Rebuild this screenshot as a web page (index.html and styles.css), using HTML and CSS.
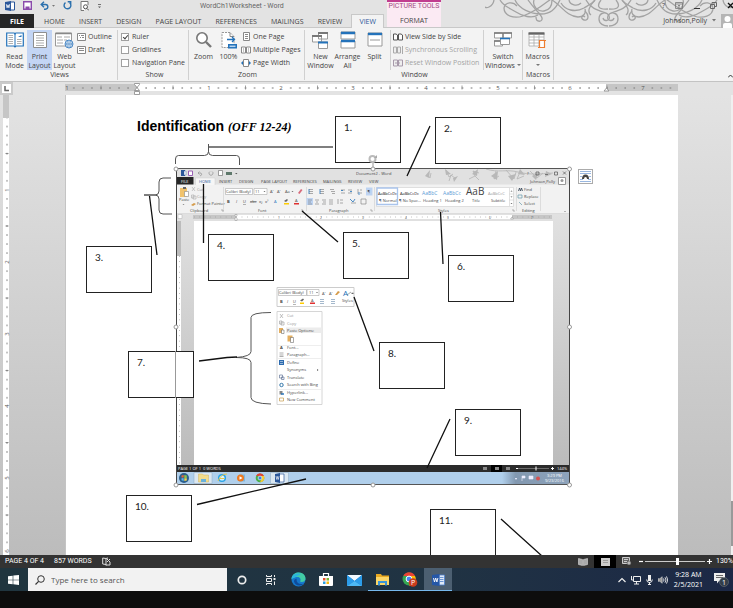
FILE: index.html
```html
<!DOCTYPE html>
<html lang="en">
<head>
    <meta charset="UTF-8">
    <meta name="viewport" content="width=device-width, initial-scale=1.0">
    <title>WordCh1Worksheet - Word</title>
    <link rel="stylesheet" href="styles.css">
</head>
<body>
    <header class="header">
        <div class="titlebar">
            <div class="quick-access">
                <svg width="10" height="10" viewBox="0 0 10 10"><path d="M5 1h4.500v8H5" fill="#fff" stroke="#2b579a"/><path d="M0 1l6-1v10l-6-1z" fill="#2b579a"/><path d="M1.300 3.200l.8 3.600.9-3 .9 3 .8-3.600" fill="none" stroke="#fff" stroke-width=".8"/></svg>
                <button aria-label="Save"><svg width="9" height="9" viewBox="0 0 9 9"><path d="M.7.7h7.600v7.600H.7z" fill="#fff" stroke="#8a4bab" stroke-width="1.400"/><path d="M2.500 8V5.500h4V8" fill="#8a4bab"/></svg></button>
                <button aria-label="Undo"><svg width="15" height="9" viewBox="0 0 15 9"><path d="M1 3.500h4.500a2.300 2.300 0 0 1 0 4.700H4M4 .8L1.200 3.500 4 6.200" fill="none" stroke="#2b70ad" stroke-width="1.400"/><path d="M12 4h3l-1.500 1.700z" fill="#777"/></svg></button>
                <button aria-label="Redo"><svg width="9" height="9" viewBox="0 0 9 9"><path d="M2.500 1.600A3.400 3.400 0 1 0 6.600 1.700M4.700.8h3v3" fill="none" stroke="#2b70ad" stroke-width="1.400"/></svg></button>
                <button aria-label="Print preview"><svg width="9" height="10" viewBox="0 0 9 10"><path d="M8 4V.5H1v9h3" fill="#fff" stroke="#777"/><circle cx="5.500" cy="5.800" r="2" fill="none" stroke="#555"/><path d="M7 7.500l2 2" stroke="#555"/></svg></button>
                <button aria-label="Customize"><svg width="5" height="6" viewBox="0 0 5 6"><path d="M1 1.500h3" stroke="#555" stroke-width=".8"/><path d="M1 3.500h3L2.500 5z" fill="#555"/></svg></button>
            </div>
            <span class="doc-title">WordCh1Worksheet - Word</span>
        </div>
        <span class="context-title">PICTURE TOOLS</span>
        <svg class="flourish" width="248" height="28" viewBox="485 0 248 28" fill="none" stroke="#a3a3a3" stroke-width="1.300">
            <g id="swirl">
                <path d="M483 0c-3 5 2 9 6 7s5-5 5-8M500 0c4 7 10 8 16 12s16 7 22 3M504 8c0 8 10 11 19 8 12-4 20-11 28-17M504 8c1-6 9-7 13-2M515 0c4 9 16 14 26 14 9 0 14-4 19-14M534 0c-2 6 4 12 10 11s8-6 8-11"/>
                <path d="M536 17c0 6 7 5 6 1s-7-8-14-18M552 0c10 6 14 16 26 17 6 0 8-4 7-8M569 0c1 5 8 7 12 3M561 3c4 7 14 10 23 5 5-3 9-5 11-8"/>
                <path d="M585 17c-3-3-5 2-1 3s6-4 1-9M595 0c-6 6-8 12-4 15M586 0c4 8 11 10 20 13M599 19c0-7 8-8 10-3s-5 6-6 2M599 19c0 5 5 7 9 7M601 0c-4 5-4 10 7 9"/>
            </g>
            <use href="#swirl" transform="matrix(-1 0 0 1 1217 0)"/>
        </svg>
        <div class="window-buttons">
            <button aria-label="Help">?</button>
            <button aria-label="Ribbon options"><svg width="8" height="7" viewBox="0 0 8 7"><path d="M.5.5h7v6h-7zM.5 2h7M4 6V3M3 4l1-1 1 1" fill="none" stroke="#777" stroke-width=".8"/></svg></button>
            <button aria-label="Minimize"><svg width="7" height="7"><path d="M1 6.500h6" stroke="#333"/></svg></button>
            <button aria-label="Restore"><svg width="7" height="7"><path d="M.5 2.500h4v4h-4zM2 2V.5h4.500v4H5" fill="none" stroke="#666"/></svg></button>
            <button aria-label="Close"><svg width="6" height="7"><path d="M1 1l5 5M6 1L1 6" stroke="#111" stroke-width="1.300"/></svg></button>
        </div>
        <nav class="tabs">
            <button class="tab tab-file">FILE</button>
            <button class="tab">HOME</button>
            <button class="tab">INSERT</button>
            <button class="tab">DESIGN</button>
            <button class="tab">PAGE LAYOUT</button>
            <button class="tab">REFERENCES</button>
            <button class="tab">MAILINGS</button>
            <button class="tab">REVIEW</button>
            <button class="tab tab-active">VIEW</button>
        </nav>
        <button class="tab tab-context">FORMAT</button>
        <div class="account">
            <span>Johnson,Polly</span>
            <svg width="4" height="3"><path d="M0 0h4L2 2.500z" fill="#777"/></svg>
            <svg width="12" height="14" viewBox="0 0 12 14"><path d="M0 0h12v14H0z" fill="#b5b5b5"/><circle cx="6.500" cy="5" r="3" fill="#fff"/><path d="M2 14v-3q0-2 2-2h5q2 0 2 2v3z" fill="#fff"/></svg>
        </div>
    </header>

    <section class="ribbon">
        <div class="group group-views">
            <div class="group-body">
                <button class="big"><svg width="18" height="18" viewBox="0 0 18 18"><path d="M.7 2h7.500l.8 1 .8-1h7.500v13H10l-1 1-1-1H.7z" fill="#fff" stroke="#2372ba" stroke-width="1.200"/><path d="M2.500 4.500h4.500M2.500 6.500h4.500M2.500 8.500h4.500M2.500 10.500h4.500M2.500 12.500h4.500M11 8.500h4.500M11 10.500h4.500M11 12.500h4.500" stroke="#8e8e8e" stroke-width=".7"/><path d="M9 3v13" stroke="#2372ba"/><path d="M12 6h3.500V4z" fill="#2372ba"/></svg><span>Read<br>Mode</span></button>
                <button class="big big-selected"><svg width="14" height="18" viewBox="0 0 14 18"><path d="M.5 1.500h13v15H.5z" fill="#fff" stroke="#8e8e8e"/><path d="M3 4.500h8M3 7h8M3 9.500h8M3 12h8M3 14.500h8" stroke="#9a9a9a" stroke-width=".8"/></svg><span>Print<br>Layout</span></button>
                <button class="big"><svg width="19" height="18" viewBox="0 0 19 18"><path d="M.5 2h16v13H.5z" fill="#fff" stroke="#999"/><path d="M.5 2.500h16" stroke="#888" stroke-width="1.500"/><path d="M2 6h5M9 6h6M2 9h6M2 12h6M9 9h3" stroke="#aaa"/><circle cx="14" cy="13" r="4" fill="#eef5fb" stroke="#3c7fc0" stroke-width=".9"/><path d="M10 13h8M14 9v8M12.500 9.500q-1.500 3.500 0 7M15.500 9.500q1.500 3.500 0 7" fill="none" stroke="#3c7fc0" stroke-width=".7"/></svg><span>Web<br>Layout</span></button>
                <div class="stack">
                    <button class="small"><svg width="9" height="8"><path d="M.5.5h8v7h-8zM2 2.500h1M4 2.500h3M3 4.500h1M5 4.500h2" fill="#fff" stroke="#888"/></svg>Outline</button>
                    <button class="small"><svg width="9" height="8"><path d="M.5.5h8v7h-8zM2 2.500h5M2 4.500h5" fill="#fff" stroke="#888"/></svg>Draft</button>
                </div>
            </div>
            <div class="group-label">Views</div>
        </div>
        <div class="group group-show">
            <div class="group-body stack">
                <label class="small"><input type="checkbox" class="check" checked>Ruler</label>
                <label class="small"><input type="checkbox" class="check">Gridlines</label>
                <label class="small"><input type="checkbox" class="check">Navigation Pane</label>
            </div>
            <div class="group-label">Show</div>
        </div>
        <div class="group group-zoom">
            <div class="group-body">
                <button class="big"><svg width="18" height="18" viewBox="0 0 18 18"><circle cx="7" cy="7" r="5.200" fill="#fff" stroke="#777" stroke-width="1.600"/><path d="M11 11l5 5" stroke="#777" stroke-width="2.400"/></svg><span>Zoom</span></button>
                <button class="big"><svg width="18" height="18" viewBox="0 0 18 18"><path d="M2 1.500h8l4 4v11H2z" fill="#fff" stroke="#999" stroke-dasharray="2 1"/><path d="M10 1.500v4h4" fill="none" stroke="#888"/><path d="M7 8.500h7M12 6l2.500 2.500L12 11" fill="none" stroke="#2372ba" stroke-width="1.300"/><path d="M8 13h9v4.500H8z" fill="#2372ba"/><path d="M9.500 15.300h6" stroke="#b9d5ee" stroke-width="1.500"/></svg><span>100%</span></button>
                <div class="stack">
                    <button class="small"><svg width="10" height="9"><path d="M2.500.5h6v8h-6zM4 2.500h3M4 4.500h3M4 6.500h3" fill="#fff" stroke="#888"/></svg>One Page</button>
                    <button class="small"><svg width="10" height="8"><path d="M.5 1h4v6h-4zM5.500 1h4v6h-4zM2 3h1M7 3h1M2 5h1M7 5h1" fill="#fff" stroke="#888"/></svg>Multiple Pages</button>
                    <button class="small"><svg width="10" height="8"><path d="M2.500.5h5v7h-5z" fill="#fff" stroke="#888"/><path d="M0 4l2-2v4zM10 4L8 2v4z" fill="#2372ba"/></svg>Page Width</button>
                </div>
            </div>
            <div class="group-label">Zoom</div>
        </div>
        <div class="group group-window">
            <div class="group-body">
                <button class="big"><svg width="18" height="18" viewBox="0 0 18 18"><path d="M6.500 2h9v6h-9zM.5 5h9v6h-9z" fill="#fff" stroke="#999"/><path d="M6 2h10M0 5h10" stroke="#777" stroke-width="2"/><path d="M6.500 11h9v6.500h-9z" fill="#fff" stroke="#999"/><path d="M6 11.500h10" stroke="#2372ba" stroke-width="2"/></svg><span>New<br>Window</span></button>
                <button class="big"><svg width="16" height="18" viewBox="0 0 16 18"><path d="M1 1h14v7H1zM1 10h14v7H1z" fill="#fff" stroke="#999"/><path d="M1 2h14M1 10h14" stroke="#2372ba" stroke-width="2.400"/></svg><span>Arrange<br>All</span></button>
                <button class="big"><svg width="16" height="18" viewBox="0 0 16 18"><path d="M1 2h14v13H1zM3 9h10" fill="#fff" stroke="#999"/><path d="M1 3h14" stroke="#2372ba" stroke-width="2.400"/></svg><span>Split</span></button>
                <div class="stack stack-ruled">
                    <button class="small"><svg width="10" height="8"><path d="M.5 1v6h4V2L3 1zM5.500 1v6h4V2L8 1z" fill="#fff" stroke="#555"/></svg>View Side by Side</button>
                    <button class="small" disabled><svg width="10" height="8"><path d="M.5 1h3v6h-3zM4.500 1h3v6h-3zM9.500 0v8" fill="#eee" stroke="#aaa"/></svg>Synchronous Scrolling</button>
                    <button class="small" disabled><svg width="10" height="8"><path d="M.5 1h4v6h-4zM5.500 1h4v6h-4zM2 4h5" fill="#eee" stroke="#a79aaa"/></svg>Reset Window Position</button>
                </div>
                <button class="big big-switch"><svg width="18" height="18" viewBox="0 0 18 18"><path d="M.5 2h8v5h-8zM9.500 2h8v5h-8zM.5 10h8v5h-8z" fill="#fff" stroke="#999"/><path d="M0 2h9M9 2h9M0 10h8" stroke="#777" stroke-width="1.500"/><path d="M6.500 7.500h9v6h-9z" fill="#fff" stroke="#999"/><path d="M6 7.500h10" stroke="#2372ba" stroke-width="1.600"/></svg><span>Switch<br>Windows<i class="caret"></i></span></button>
            </div>
            <div class="group-label">Window</div>
        </div>
        <div class="group group-macros">
            <div class="group-body">
                <button class="big"><svg width="19" height="18" viewBox="0 0 19 18"><path d="M1 2h15v13H1zM1 6h15M1 9h15M1 12h15M6 4v11M11 4v11" fill="#fff" stroke="#aaa" stroke-width=".8"/><path d="M.5 2.500h16" stroke="#666" stroke-width="2.400"/><path d="M11.500 16V9.500h6.500M16.500 10v6.500H10" fill="#fff" stroke="#ed7d31" stroke-width="1.200"/></svg><span>Macros<br><i class="caret"></i></span></button>
            </div>
            <div class="group-label">Macros</div>
        </div>
        <button class="collapse" aria-label="Collapse ribbon"><svg width="5" height="4"><path d="M0 3.500L2.500 1 5 3.500" fill="none" stroke="#333"/></svg></button>
    </section>

    <div class="ruler-row">
        <span class="tab-stop"><svg width="9" height="9" viewBox="0 0 9 9"><path d="M3 2v4.500h4" fill="none" stroke="#666" stroke-width="1.500"/></svg></span>
        <svg class="ruler" width="614" height="13" viewBox="65 82 614 13">
            <defs><pattern id="eighths" x="137" y="84" width="9.040" height="8" patternUnits="userSpaceOnUse"><path d="M0 3h.6v2H0zM8.600 3h.6v2h-.6z" fill="#888"/></pattern></defs>
            <path d="M65 84h613v7H65z" fill="#c6c6c6"/>
            <path d="M137 84h469v7H137z" fill="#fff"/>
            <path d="M65 84h613v7H65z" fill="url(#eighths)"/>
            <path d="M101 85.500v4M173 85.500v4M245.500 85.500v4M317.500 85.500v4M390 85.500v4M462 85.500v4M534.500 85.500v4M607 85.500v4" stroke="#888" stroke-width=".8"/>
            <path d="M206 85h6v5h-6zM278 85h6v5h-6zM350 85h6v5h-6zM423 85h6v5h-6zM495 85h6v5h-6zM567 85h6v5h-6z" fill="#fff"/>
            <path d="M640 85h6v5h-6zM65 85h3v5h-3z" fill="#c6c6c6"/>
            <g class="ruler-text"><text x="67" y="90">1</text><text x="209" y="90">1</text><text x="281" y="90">2</text><text x="353" y="90">3</text><text x="426" y="90">4</text><text x="498" y="90">5</text><text x="570" y="90">6</text><text x="643" y="90">7</text></g>
            <path d="M134.500 83.500h5v1l-2.500 3-2.500-3zM137 87.500l2.500 3h-5zM134.500 91.500h5v3h-5zM606.500 88l2.500 3h-5z" fill="#fff" stroke="#888" stroke-width=".8"/>
        </svg>
    </div>

    <main class="workspace">
        <svg class="side-ruler" width="10" height="460" viewBox="0 95 10 460">
            <defs><pattern id="side-eighths" x="3" y="117.500" width="6" height="9.040" patternUnits="userSpaceOnUse"><path d="M3 0h2v.5H3zM3 8.600h2v.5H3z" fill="#888"/></pattern></defs>
            <path d="M3 95h6v23H3z" fill="#c6c6c6"/>
            <path d="M3 118h6v437H3z" fill="#fff"/>
            <path d="M3 118h6v437H3z" fill="url(#side-eighths)"/>
            <path d="M5.500 153.500h3M5.500 226h3M5.500 298h3M5.500 370.500h3M5.500 442.500h3M5.500 515h3" stroke="#777" stroke-width=".8"/>
            <path d="M3 187h6v5H3zM3 259h6v5H3zM3 331h6v5H3zM3 404h6v5H3zM3 476h6v5H3zM3 548h6v5H3z" fill="#fff"/>
            <g class="ruler-text"><text transform="translate(9 190) rotate(-90)">1</text><text transform="translate(9 262) rotate(-90)">2</text><text transform="translate(9 334) rotate(-90)">3</text><text transform="translate(9 406) rotate(-90)">4</text><text transform="translate(9 478) rotate(-90)">5</text><text transform="translate(9 551) rotate(-90)">6</text></g>
        </svg>
        <article class="sheet">
            <h1 class="sheet-title">Identification <em>(OFF 12-24)</em></h1>

            <!-- the labelled picture of the Word window -->
            <svg class="word-picture" width="394" height="317" viewBox="176 168 394 317">
                <defs>
                    <linearGradient id="desk" x2="0" y2="1"><stop offset="0" stop-color="#e1e1e1"/><stop offset="1" stop-color="#bbb"/></linearGradient>
                    <linearGradient id="tray"><stop offset="0" stop-color="#b0cfeb"/><stop offset=".2" stop-color="#8298b0"/><stop offset="1" stop-color="#8da3bb"/></linearGradient>
                </defs>
                <path d="M176 168h394v317H176z" fill="#e1e1e1"/>
                <path d="M176 214h394v252H176z" fill="url(#desk)"/>
                <path d="M194 221h359v245H194z" fill="#fff"/>
                <!-- title bar and leaves -->
                <g fill="none" stroke="#b4b4b4" stroke-width=".8"><path d="M427 174l3 4 1-5M446 170l3 7 4-3M449 181l2-6 5 4M469 179l6-3 4 4M475 176l-2-5 6 2M486 169c12 4 21 0 32 3s22 2 35 1M496 171l-2 8 5-3M506 170l8 9 2-7M520 172l-3 7 7-3M530 171l7 7 6-5"/></g>
                <g fill="#b8b8b8"><path d="M425 176l5-6-1 8zM445 169l6 5-5 1zM453 178l5-2-4 6zM472 174l6-5-1 7zM491 176l7-5-1 9zM508 176l8-2-4 7zM520 169l5 6-7-1zM532 176l7-4-3 8zM546 171l6 3-7 3z"/></g>
                <path d="M181 170h4v6h-4z" fill="#2b579a"/><path d="M184 171h2v4h-2z" fill="#fff" stroke="#2b579a" stroke-width=".4"/>
                <path d="M188.500 171h4v4.500h-4z" fill="#fff" stroke="#9a60b5"/>
                <path d="M198 173h3q2 2-1 3M199.500 171.500l-1.500 1.500 1.500 1.500M210 171.500a2 2 0 1 0 2 0" fill="none" stroke="#999" stroke-width=".8"/>
                <path d="M218.500 170.500h4v5h-4z" fill="#fff" stroke="#777" stroke-width=".7"/><path d="M226 172h6v3h-6z" fill="#5e786b"/><path d="M235 173h2.500l-1.200 1.300z" fill="#555"/>
                <text x="356" y="175">Document2 - Word</text>
                <path d="M536 172h3v3h-3zM545 174.500h3M554.500 172h3v3h-3zM563 171.500l3 3M566 171.500l-3 3" fill="none" stroke="#555" stroke-width=".7"/><text x="527" y="175">?</text>
                <!-- tabs -->
                <path d="M176 177h17.500v8H176z" fill="#262626"/>
                <path d="M176 184.500h394V214H176z" fill="#f2f2f2"/><path d="M195.500 185v-7H215v7" fill="#f6f6f6" stroke="#ccc" stroke-width=".5"/>
                <g class="pic-tabs"><text x="181" y="183" fill="#fff">FILE</text><text x="199" y="183" fill="#2b579a">HOME</text><text x="219" y="183">INSERT</text><text x="239" y="183">DESIGN</text><text x="261" y="183">PAGE LAYOUT</text><text x="293" y="183">REFERENCES</text><text x="323" y="183">MAILINGS</text><text x="348" y="183">REVIEW</text><text x="369" y="183">VIEW</text></g>
                <text x="530" y="183">Johnson,Polly</text>
                <path d="M558.500 177.500h7v7h-7z" fill="#fff" stroke="#999"/><circle cx="562" cy="180.500" r="1.500" fill="#999"/>
                <!-- ribbon -->
                <path d="M180 188h7v9h-7z" fill="#f1c36d"/><path d="M183 187h3v2h-3z" fill="#666"/><path d="M184.500 191.500h4v5h-4z" fill="#fff" stroke="#888" stroke-width=".6"/>
                <text x="179" y="201">Paste</text><path d="M182.500 204h2l-1 1z" fill="#777"/>
                <path d="M192 187l3 4M195 187l-3 4M191.500 195h2.500v3h-2.500zM193 196h3v3h-3z" fill="none" stroke="#aaa" stroke-width=".6"/><path d="M191 205l3-2 2 1-3 2z" fill="#d59b4a"/>
                <text x="197" y="191" class="pic-dim">Cut</text><text x="197" y="198" class="pic-dim">Copy</text><text x="197" y="205">Format Painter</text>
                <path d="M223.500 187v24M306.500 187v24M374.500 187v24M516.500 187v24M540.500 187v24M176 213.500h394" stroke="#ccc" stroke-width=".6"/>
                <path d="M225.500 188.500h27v6h-27zM254 188.500h13v6h-13z" fill="#fff" stroke="#aaa" stroke-width=".6"/>
                <text x="226" y="193">Calibri (Body)</text><text x="255" y="193">11</text><path d="M263.500 191h2l-1 1zM291.500 191h2l-1 1z" fill="#555"/>
                <text x="270" y="193">A˄</text><text x="277" y="193">A˅</text><text x="285" y="193">Aa</text><path d="M298 193l3-4 1.500 1-3 4z" fill="#d76b7b"/>
                <text x="227" y="203" font-weight="bold">B</text><text x="236" y="203" font-style="italic">I</text><text x="243" y="203" text-decoration="underline">U</text><text x="250" y="203" text-decoration="line-through">abc</text><text x="259" y="203">x₂</text><text x="265" y="203">x²</text>
                <text x="274" y="203" fill="#2372ba">A</text><path d="M284 203h5v1.500h-5z" fill="#fc0"/><path d="M284 201l3-2 1 1-2 2z" fill="#666"/><text x="295" y="202">A</text><path d="M294 203h5v1.500h-5z" fill="#e03030"/>
                <path d="M366 187.500h6.500v8H366zM306.500 198h6.500v7h-6.500z" fill="#bdd3f2"/>
                <path d="M309 189.500h4M309 191.500h4M309 193.500h4M320 189.500h4M320 191.500h4M320 193.500h4M330 189.500h4M331 191.500h4M332 193.500h3M341 190h4M341 193h4M348 190h4M348 193h4M358 189v5M360 190h2M360 193h2M308 200h4M308 202h3M308 204h4M315 200h4M316 202h2M315 204h4M322 200h4M323 202h3M322 204h4M329 200h4M329 202h4M329 204h4M338 199v5M340 200h3M340 203h3M351 203h5M361 199h5v5h-5z" fill="none" stroke="#777" stroke-width=".6"/>
                <path d="M309 189v5M320 189v5M341 190.500h2M350 191.500h2M359 192v3M350 199l3 3 2-3" fill="none" stroke="#2372ba" stroke-width=".8"/><text x="367.500" y="193">¶</text>
                <path d="M376.500 187.500h137v19h-137z" fill="#fff" stroke="#ccc" stroke-width=".6"/><path d="M377 188h20.500v16.500H377z" fill="none" stroke="#a9c4ec" stroke-width="1.300"/>
                <path d="M509.500 188v18M509.500 194h4M509.500 200h4" stroke="#ccc" stroke-width=".6"/><path d="M510.500 191.500l1-1 1 1zM510.500 196.500h2l-1 1zM510.500 203h2l-1 1z" fill="#555"/>
                <g class="pic-sample"><text x="378" y="195">AaBbCcDc</text><text x="400" y="195">AaBbCcDc</text></g>
                <g class="pic-heading"><text x="422" y="195">AaBbC</text><text x="443" y="195">AaBbCc</text></g>
                <text x="466" y="195" class="pic-big">AaB</text><text x="488" y="195" class="pic-dim">AaBbCcC</text>
                <text x="379" y="202">¶ Normal</text><text x="399" y="202">¶ No Spac...</text><text x="423" y="202">Heading 1</text><text x="445" y="202">Heading 2</text><text x="472" y="202">Title</text><text x="491" y="202">Subtitle</text>
                <path d="M518.500 191l1-3 1 3 1-3 1 3" fill="none" stroke="#345" stroke-width=".8"/><path d="M518 195h4v3h-4zM519 202l3 3" fill="none" stroke="#69a" stroke-width=".7"/>
                <text x="524" y="191">Find</text><text x="524" y="198">Replace</text><text x="524" y="205">Select</text>
                <text x="190" y="212">Clipboard</text><text x="258" y="212">Font</text><text x="329" y="212">Paragraph</text><text x="438" y="212">Styles</text><text x="522" y="212">Editing</text>
                <path d="M221 210h2v2M301 210h2v2M370 210h2v2M512 210h2v2M564 212l1-1 1 1" fill="none" stroke="#777" stroke-width=".5"/>
                <!-- rulers -->
                <path d="M178 214.500h4v4h-4z" fill="#fff" stroke="#bbb" stroke-width=".6"/><path d="M193 215h359v4H193z" fill="#c6c6c6"/><path d="M236 215h276v4H236z" fill="#fff"/>
                <path d="M194 217h358" stroke="#999" stroke-dasharray=".6 4.700"/><g class="pic-ruler"><text x="278" y="218.500">1</text><text x="320" y="218.500">2</text><text x="362" y="218.500">3</text><text x="405" y="218.500">4</text><text x="447" y="218.500">5</text><text x="489" y="218.500">6</text><text x="531" y="218.500">7</text></g>
                <path d="M235 214.500h2v1l-1 1.500 1 1.500v2h-2v-2l1-1.500-1-1.500zM512 217l1.500 2h-3z" fill="#fff" stroke="#888" stroke-width=".5"/>
                <path d="M177 221h4v35h-4z" fill="#bcbcbc"/><path d="M177 256h4v209h-4z" fill="#fff"/><path d="M179.500 256v209" stroke="#999" stroke-dasharray=".6 4.700"/>
                <!-- mini toolbar -->
                <path d="M277 287.500h77v19h-77z" fill="#fff" stroke="#ccc"/><path d="M278.500 289.500h28v6h-28zM307 289.500h12v6h-12z" fill="#fff" stroke="#aaa" stroke-width=".6"/>
                <text x="279" y="294">Calibri (Body)</text><text x="309" y="294">11</text><path d="M316 292h2l-1 1z" fill="#555"/><text x="322" y="295">A˄</text><text x="329" y="295">A˅</text><path d="M335 295l3-4 2 1-3 3z" fill="#d59b4a"/><text x="343" y="296" class="pic-style">A</text><path d="M347 295l4-3M351.500 293h2l-1 1z" fill="#555" stroke="#555" stroke-width=".5"/>
                <text x="280" y="303" font-weight="bold">B</text><text x="287" y="303" font-style="italic">I</text><text x="293" y="303" text-decoration="underline">U</text><path d="M300 302.500h4v1.500h-4z" fill="#fc0"/><path d="M300 300.500l3-2 1 1-2 2z" fill="#666"/><text x="311" y="302">A</text><path d="M310 302.500h5v1.500h-5z" fill="#e03030"/><path d="M320 299.500h4M320 301.500h4M320 303.500h4M331 299.500h4M331 301.500h4M331 303.500h4" stroke="#68a" stroke-width=".6"/><text x="342" y="302">Styles</text>
                <!-- context menu -->
                <path d="M277 311.500h45v93h-45z" fill="#fff" stroke="#ccc" stroke-width=".8"/><path d="M286 327.500h36v5.500h-36z" fill="#ececec"/>
                <path d="M280 314l3 4M283 314l-3 4M279.500 321h2.500v3h-2.500zM281 322h3v3h-3z" fill="none" stroke="#999" stroke-width=".6"/>
                <path d="M279 328h4v5h-4zM287.500 335.500h5v6h-5z" fill="#e4af60"/><path d="M281.500 330h2.500v3.500h-2.500zM290.500 337.500h3v5h-3z" fill="#fff" stroke="#555" stroke-width=".5"/>
                <text x="280" y="349" font-weight="bold">A</text><path d="M279.500 353h4M279.500 355h4M279.500 356.500h4" stroke="#777" stroke-width=".6"/><path d="M279 360h5v5h-5z" fill="#2e6cb0"/><path d="M280 361.500h3M280 363.500h3" stroke="#fff" stroke-width=".5"/>
                <path d="M279.500 375h3v3h-3zM281.500 377h2.500v2.500h-2.500z" fill="#fff" stroke="#679" stroke-width=".7"/><circle cx="281.500" cy="385" r="1.700" fill="#fff" stroke="#37a"/><path d="M279.500 391h3v3.500h-3z" fill="#888"/><path d="M281 394h3" stroke="#2372ba" stroke-width="1.400"/><path d="M279.500 398h4v3h-4z" fill="#fff" stroke="#c79b4b" stroke-width=".7"/>
                <text x="287" y="317" class="pic-dim">Cut</text><text x="287" y="325" class="pic-dim">Copy</text><text x="287" y="332">Paste Options:</text><text x="287" y="349">Font...</text><text x="287" y="356">Paragraph...</text><text x="287" y="364">Define</text><text x="287" y="371">Synonyms</text><path d="M317 369l1.500 1-1.500 1z" fill="#555"/><text x="287" y="379">Translate</text><text x="287" y="386">Search with Bing</text><text x="287" y="394">Hyperlink...</text><text x="287" y="401">New Comment</text>
                <path d="M278 345.500h43M278 358.500h43M278 389.500h43" stroke="#e3e3e3" stroke-width=".6"/>
                <!-- status bar and taskbar -->
                <path d="M176 465h394v7.500H176z" fill="#2b2b2b"/><g class="pic-status"><text x="178" y="470">PAGE 1 OF 1</text><text x="203" y="470">0 WORDS</text><text x="557" y="470">144%</text></g>
                <path d="M491 465h11v7h-11z" fill="#000"/><path d="M483 467h4v3h-4zM495 467h4v3h-4zM506 467h4v3h-4z" fill="#888"/><path d="M518 468.500h31" stroke="#999" stroke-width=".6"/><path d="M516 468.500h2M551 468.500h3M552.500 467v3M536 466.500v4" stroke="#fff"/>
                <path d="M176 472h394v12H176z" fill="#b0cfeb"/><path d="M502 472h68v12h-68z" fill="url(#tray)"/><path d="M194 472.500h18v11h-18zM270.500 472.500h18v11h-18z" fill="#dbe7f1" stroke="#8ea9c0" stroke-width=".5"/>
                <circle cx="184" cy="478" r="5" fill="#2b5f8c"/><path d="M181.500 475.500l2.200-.5v2.600h-2.200z" fill="#e8663a"/><path d="M184.300 475l2.500.5v2.400h-2.500z" fill="#8cc44a"/><path d="M181.500 478.200h2.200v2.800l-2.200-.7z" fill="#5cb5ed"/><path d="M184.300 478.200h2.500v2.200l-2.500.6z" fill="#f6d14b"/>
                <path d="M198.500 474h4l1 1h5v7h-10z" fill="#f3dc8c" stroke="#c9a94c" stroke-width=".4"/><path d="M201 479h5v3h-5z" fill="#69b2dc"/>
                <circle cx="222" cy="478" r="3.300" fill="#d9f2ff" stroke="#2aa4e6" stroke-width="1.500"/><path d="M218 481q3-7 9-7M219.500 478.500h5" fill="none" stroke="#e2c64a"/>
                <path d="M239 474.500h6v7h-6z" fill="#7fb8dd"/><circle cx="240.500" cy="478" r="3.500" fill="#ee7a21"/><path d="M239.500 476.200l3 1.800-3 1.800z" fill="#fff"/>
                <circle cx="260" cy="478" r="4.300" fill="#4aae48"/><path d="M256 476a4.300 4.300 0 0 1 8 0h-4z" fill="#df4433"/><path d="M264 476a4.300 4.300 0 0 1-4 6.300l2-4.300-2-2z" fill="#f8cb2f"/><circle cx="260" cy="478" r="1.900" fill="#3e7fe3" stroke="#fff" stroke-width=".6"/>
                <path d="M279 474h5v8h-5z" fill="#fff" stroke="#2b579a" stroke-width=".7"/><path d="M275 474l5-1v10l-5-1z" fill="#2b579a"/><path d="M276 476l.8 3.500.7-3 .8 3 .8-3.500" fill="none" stroke="#fff" stroke-width=".6"/>
                <path d="M515 479l1-1 1 1zM522 476v5M522 476h3v2h-3M529 476h4v3h-4z" fill="#eef" stroke="#eef" stroke-width=".6"/><circle cx="538" cy="478.500" r="2" fill="#d65252"/><g class="pic-status"><text x="547" y="477">3:29 PM</text><text x="545" y="482">9/23/2016</text></g>
                <path d="M176.500 168v316M569.500 168v316" fill="none" stroke="#444"/><path d="M176 168.500h394M176 484.500h394" stroke="#555"/>
            </svg>

            <div class="answer answer-1">1.</div>
            <div class="answer answer-2">2.</div>
            <div class="answer answer-3">3.</div>
            <div class="answer answer-4">4.</div>
            <div class="answer answer-5">5.</div>
            <div class="answer answer-6">6.</div>
            <div class="answer answer-7">7.</div>
            <div class="answer answer-8">8.</div>
            <div class="answer answer-9">9.</div>
            <div class="answer answer-10">10.</div>
            <div class="answer answer-11">11.</div>

            <!-- braces, pointers and selection handles -->
            <svg class="pointers" width="612" height="460" viewBox="66 95 612 460" fill="none">
                <path d="M175.500 164v-5q0-3.500 3-3.500h26q4 0 4-4V144v7.500q0 4 4 4h24q3 0 3 3.500v6M171 178h-8q-4 0-4 4v9q0 4-4 4h-11 11q4 0 4 4v11q0 4 4 4h9M271 312.500q-20 0-20 5v34q0 5-15 6 15 0 15 5v35q0 6 20 6.500" stroke="#555"/>
                <path d="M209 147h124" stroke="#555" stroke-width="1.400"/>
                <path d="M430 126l-23 50M149.500 196l7.500 59M203.500 184v59M302 211l36 31M440.500 212l2.500 52M354 297l20 54M450 419l-23 49M199 361l28-3.500 10-.5M197 504.500l109-25.500M501 519l41 37" stroke="#111" stroke-width="1.300"/>
                <path d="M175.500 351v47" stroke="#999"/>
                <path d="M373 162v5" stroke="#999"/>
                <g fill="#fff" stroke="#999"><circle cx="176" cy="169" r="2"/><circle cx="373" cy="169" r="2"/><circle cx="569.500" cy="169" r="2"/><circle cx="176" cy="327" r="2"/><circle cx="569.500" cy="327" r="2"/><circle cx="176" cy="485" r="2"/><circle cx="373" cy="485" r="2"/><circle cx="569.500" cy="485" r="2"/></g>
                <circle cx="372.500" cy="159" r="3" fill="#fff" stroke="#bbb" stroke-width="2"/><path d="M374 158h3v-3z" fill="#aaa"/>
            </svg>
            <button class="layout-options" aria-label="Layout Options"><svg width="13" height="13" viewBox="0 0 13 13"><path d="M1 1.500h11M1 3.500h11M1 9.500h3M9 9.500h3M1 11.500h11M1 6.500h2M10 6.500h2" stroke="#7fa5d8" stroke-width=".8"/><path d="M3 9q0-4.500 3.500-4.500T10 9H8q0-2-1.500-2T5 9z" fill="#444"/></svg></button>
        </article>
        <div class="scrollbar"><div class="scroll-thumb"></div></div>
    </main>

    <footer class="status">
        <span>PAGE 4 OF 4</span>
        <span>857 WORDS</span>
        <svg width="9" height="9" viewBox="0 0 9 9"><path d="M4 7.500L.7 7V1L4 1.500v7M4 1.500L6 1M4 8h4V5" fill="none" stroke="#ddd"/><path d="M5 2l3 3M8 2L5 5" stroke="#ddd"/></svg>
        <div class="view-switch">
            <button aria-label="Read mode"><svg width="10" height="8" viewBox="0 0 10 8"><path d="M.5.500l4 1v6l-4-1zM9.500.5l-4 1v6l4-1z" fill="#aaa" stroke="#ddd" stroke-width=".6"/></svg></button>
            <button class="view-current" aria-label="Print layout"><svg width="9" height="8"><path d="M0 0h9v8H0z" fill="#ccc"/><path d="M2 2.500h5M2 4.500h5" stroke="#888" stroke-width=".7"/></svg></button>
            <button aria-label="Web layout"><svg width="10" height="9"><path d="M.5.5h7v6h-7zM2 2.500h4M2 4.500h3" fill="#666" stroke="#ccc"/><circle cx="7" cy="6" r="2" fill="#bbb" stroke="#444" stroke-width=".5"/></svg></button>
        </div>
        <div class="zoom">
            <button aria-label="Zoom out"><svg width="4" height="5"><path d="M0 2.500h4" stroke="#fff" stroke-width="1.200"/></svg></button>
            <input type="range" class="zoom-range" min="0" max="100" value="54" aria-label="Zoom level">
            <button aria-label="Zoom in"><svg width="5" height="5"><path d="M0 2.500h5M2.500 0v5" stroke="#fff" stroke-width="1.200"/></svg></button>
            <span class="zoom-value">130%</span>
        </div>
    </footer>

    <footer class="taskbar">
        <button class="start" aria-label="Start"><svg width="11" height="10" viewBox="0 0 11 10"><path d="M0 1.300L4.700.7v4H0zM5.300.6L11 0v4.700H5.300zM0 5.300h4.700v4L0 8.700zM5.300 5.300H11V10l-5.700-.7z" fill="#fff"/></svg></button>
        <label class="search">
            <svg width="10" height="10" viewBox="0 0 10 10"><circle cx="6" cy="4" r="3.300" fill="none" stroke="#333"/><path d="M3.600 6.400L.5 9.500" stroke="#333" stroke-width="1.200"/></svg>
            <input type="search" placeholder="Type here to search" aria-label="Search">
        </label>
        <button class="app" aria-label="Cortana"><svg width="10" height="10"><circle cx="5" cy="5" r="3.700" fill="none" stroke="#eee" stroke-width="1.700"/></svg></button>
        <button class="app" aria-label="Task view"><svg width="11" height="10" viewBox="0 0 11 10"><path d="M1.500 3.500h5v3h-5zM1.500 0v1.500h5V0M1.500 10V8.500h5V10M9.500 0v2M9.500 6.500V10" fill="none" stroke="#eee"/><path d="M8.500 3h2v2h-2z" fill="#eee"/></svg></button>
        <button class="app" aria-label="Edge"><svg width="15" height="15" viewBox="0 0 15 15"><circle cx="7.500" cy="7.500" r="7" fill="#1678cb"/><path d="M.6 7C1 2 5 .3 8 .5c5 .3 7 4 6.400 7-.6 2.500-4 3-5.400 2 1.500-2 0-4.500-2.500-4.500S2 5 .6 7z" fill="#42cba5"/><path d="M.6 7c0-4 4.500-6.500 9-5 .500 1-3 1-4.500 3z" fill="#2bb4de"/><path d="M5.500 7.500c0 4 4 5.500 7.500 4-3 3-9 2.500-10-2 0-2 1.500-3 3-2.800z" fill="#0f4c9a"/></svg></button>
        <button class="app" aria-label="Store"><svg width="14" height="15" viewBox="0 0 14 15"><path d="M4.500 4V1.500h5V4" fill="none" stroke="#fff" stroke-width="1.200"/><path d="M0 4h14v9q0 1-1 1H1q-1 0-1-1z" fill="#fff"/><path d="M4 6h2.500v2.500H4z" fill="#e8502d"/><path d="M7.500 6H10v2.500H7.500z" fill="#7db52f"/><path d="M4 9.500h2.500V12H4z" fill="#2a9fe0"/><path d="M7.500 9.500H10V12H7.500z" fill="#f6b60f"/></svg></button>
        <button class="app" aria-label="Mail"><svg width="15" height="13" viewBox="0 0 15 13"><path d="M0 2h15v11H0z" fill="#1667b5"/><path d="M0 2h15L7.500 8z" fill="#f3faff"/><path d="M0 2l7.500 6L0 13z" fill="#2b9cea"/><path d="M15 2L7.500 8l7.500 5z" fill="#2b9cea"/><path d="M0 13l7.500-5 7.500 5z" fill="#4db9f6"/></svg></button>
        <button class="app app-open" aria-label="File Explorer"><svg width="13" height="12" viewBox="0 0 13 12"><path d="M0 0h5l1 1.500h7V11H0z" fill="#e8a922"/><path d="M0 3h13v8H0z" fill="#fbd667"/><path d="M2 7h9v4.500H9V9H4v2.500H2z" fill="#3a94d8"/></svg></button>
        <button class="app app-open" aria-label="Chrome"><svg width="16" height="15" viewBox="0 0 16 15"><circle cx="7" cy="7" r="6.500" fill="#35a753"/><path d="M1.300 4A6.500 6.500 0 0 1 13 4H7z" fill="#ea4335"/><path d="M13 4a6.500 6.500 0 0 1-6 9.500L10 8 8 4z" fill="#fbbc05"/><circle cx="7" cy="7" r="2.900" fill="#4285f4" stroke="#fff"/><circle cx="11" cy="10.500" r="4.300" fill="#c83c1c"/><text x="11" y="13" class="badge-text">P</text></svg></button>
        <button class="app app-open app-current" aria-label="Word"><svg width="13" height="12" viewBox="0 0 13 12"><path d="M7 1h5.500v10H7zM8 3.500h3.500M8 5.500h3.500M8 7.500h3.500" fill="#dfe9f7" stroke="#4b7fca" stroke-width=".8"/><path d="M0 1l7.500-1v12L0 11z" fill="#2557a7"/><path d="M1.500 4l1 4 1.200-4 1.200 4 1-4" fill="none" stroke="#fff" stroke-width=".9"/></svg></button>
        <div class="tray">
            <svg width="8" height="6"><path d="M.5 5L4 1.500 7.500 5" fill="none" stroke="#eee" stroke-width="1.200"/></svg>
            <svg width="10" height="10"><path d="M2.500 1.500h7v5h-7zM3 9h5M5.500 6.500V9M.5 1v4h2" fill="none" stroke="#eee"/></svg>
            <svg width="7" height="10"><path d="M2 0h3v6H2z" fill="#eee"/><path d="M.7 4.500q0 3 2.800 3t2.800-3M3.500 7v3M2 9.500h3" fill="none" stroke="#eee"/></svg>
            <svg width="10" height="8" viewBox="0 0 10 8"><path d="M0 2.700h1.800L4.200.7v6.600L1.800 5.300H0z" fill="#999" stroke="#eee" stroke-width=".5"/><path d="M5.500 2.500q1 1.500 0 3M7 1.300q2 2.700 0 5.400M8.500.4q2.500 3.600 0 7.200" fill="none" stroke="#eee" stroke-width=".9"/></svg>
            <time class="clock">9:28 AM<br>2/5/2021</time>
            <svg width="15" height="15" viewBox="0 0 15 15"><path d="M0 1h11v8H5l-2 2.500V9H0z" fill="#eee"/><path d="M2 3.500h7M2 5.500h7" stroke="#444" stroke-width=".8"/><circle cx="10" cy="10" r="4.500" fill="#333d48" stroke="#6b747c" stroke-width=".6"/><text x="10" y="13" class="badge-text">1</text></svg>
        </div>
    </footer>
</body>
</html>
```
FILE: styles.css
```css
* {
    box-sizing: border-box;
}

body {
    margin: 0;
    height: 100vh;
    padding-bottom: 17px; /* black strip below the taskbar */
    display: flex;
    flex-direction: column;
    overflow: hidden;
    background-color: #0d0d0d;
    color: #444;
    font-family: "Open Sans", "Noto Sans", sans-serif;
    font-size: 7px;
    line-height: 9px;
}

svg {
    display: block;
    flex: none;
}

button {
    border: none;
    padding: 0;
    background: none;
    color: inherit;
    font: inherit;
    white-space: nowrap;
}

/* Title bar and tabs */
.header {
    flex: none;
    display: grid;
    grid-template-columns: 387px 54px 1fr;
    grid-template-rows: 14px 14px;
    background-color: #e3e3e3;
    border-bottom: 1px solid #c8c8c8;
    height: 28px;
}

.titlebar {
    display: flex;
    align-items: flex-start;
    padding-left: 5px;
}

.quick-access {
    display: flex;
    align-items: center;
    gap: 8px;
    width: 195px;
    height: 11px;
}

.doc-title {
    color: #666;
    font-family: Roboto, "Open Sans", sans-serif;
    line-height: 12px;
}

.context-title {
    background-color: #fbeaf3;
    border-top: 2px solid #c13d8f;
    color: #a54a85;
    font-family: Roboto, "Open Sans", sans-serif;
    text-align: center;
    line-height: 9px;
    white-space: nowrap;
}

.flourish {
    grid-column: 3;
    grid-row: 1 / 3;
    justify-self: end;
}

.window-buttons {
    grid-column: 3;
    grid-row: 1;
    display: flex;
    justify-content: flex-end;
    align-items: center;
    gap: 10px;
    height: 11px;
}

.tabs {
    grid-column: 1;
    display: flex;
    color: #444;
}

.tab {
    padding: 0 7px;
    line-height: 13px;
}

.tab-file {
    width: 34px;
    margin-right: 3px;
    background-color: #262626;
    color: #fff;
    font-weight: bold;
}

.tabs .tab:not(.tab-file) {
    flex: auto;
}

.tabs .tab-active {
    margin: 0 3px 0 2px;
    border: 1px solid #c8c8c8;
    border-bottom: none;
    background-color: #f3f3f3;
    color: #2b579a;
    height: 14px;
    line-height: 11px;
}

.tab-context {
    background-color: #fbeaf3;
    height: 13px;
}

.account {
    grid-column: 3;
    grid-row: 2;
    display: flex;
    justify-content: flex-end;
    align-items: center;
    gap: 5px;
    height: 13px;
}

/* Ribbon */
.ribbon {
    flex: none;
    display: flex;
    padding-top: 2px;
    height: 54px;
    background-color: #f3f3f3;
    border-bottom: 1px solid #c3c3c3;
}

.group {
    display: flex;
    flex-direction: column;
    justify-content: space-between;
    border-right: 1px solid #d0d0d0;
    height: 50px;
}

.group-views {
    width: 118px;
    padding-left: 2px;
}

.group-show {
    width: 71px;
    padding-left: 3px;
}

.group-zoom {
    width: 116px;
    padding-left: 2px;
}

.group-window {
    width: 218px;
    padding-left: 2px;
}

.group-macros {
    width: 31px;
}

.group-body {
    display: flex;
    height: 40px;
}

.group-label {
    text-align: center;
    line-height: 10px;
}

.big {
    width: 25px;
    height: 40px;
    display: flex;
    flex-direction: column;
    align-items: center;
    justify-content: flex-start;
    gap: 3px;
    text-align: center;
}

.big svg {
    margin-top: 1px;
}

.big-selected {
    background-color: #c3d5f4;
}

.group-window .big {
    width: 27px;
}

.group-window .big-switch {
    width: 38px;
}

.group-macros .big {
    width: 29px;
}

.caret {
    display: inline-block;
    margin-left: 2px;
    border: 2px solid transparent;
    border-top-color: #777;
    border-bottom: none;
    vertical-align: 2px;
}

.stack {
    display: flex;
    flex-direction: column;
}

.stack .small {
    display: flex;
    align-items: center;
    gap: 2px;
    height: 13px;
    white-space: nowrap;
}

.stack .small:disabled {
    color: #a3a3a3;
}

.stack.group-body .small {
    gap: 3px;
}

.stack-ruled {
    width: 94px;
    margin-left: 2px;
    padding-left: 2px;
    border-left: 1px solid #d0d0d0;
    border-right: 1px solid #d0d0d0;
}

.check {
    appearance: none;
    width: 8px;
    height: 8px;
    margin: 0;
    border: 1px solid #a0a0a0;
    background-color: #fff;
}

.check:checked::after {
    content: "";
    display: block;
    width: 2px;
    height: 4px;
    margin: 0 2px;
    border-right: 1px solid #444;
    border-bottom: 1px solid #444;
    transform: rotate(40deg);
}

.collapse {
    margin-left: auto;
    align-self: flex-end;
    padding-bottom: 3px;
}

/* Rulers */
.ruler-row {
    flex: none;
    display: flex;
    gap: 52px;
    background-color: #e3e3e3;
    height: 13px;
}

.tab-stop {
    width: 13px;
    border: 2px solid #cacaca;
    background-color: #fff;
}

.ruler-text {
    font-size: 6px;
    fill: #555;
    text-anchor: middle;
}

/* Document */
.workspace {
    flex: 1;
    min-height: 0;
    display: flex;
    overflow: hidden;
    background-image: linear-gradient(#e3e3e3, #bcbcbc);
}

.sheet {
    position: relative;
    flex: 1;
    margin: 0 53px 0 55px;
    border-left: 1px solid #c4c4c4;
    background-color: #fff;
    overflow: hidden;
}

.sheet-title {
    margin: 23px 0 0 71px;
    color: #000;
    font: bold 14px/16px "Liberation Sans", Arial, sans-serif;
}

.sheet-title em {
    font: italic bold 12px/16px "Liberation Serif", serif;
}

.word-picture {
    position: absolute;
    left: 110px;
    top: 73px;
    font-family: "Open Sans", "Noto Sans", sans-serif;
    font-size: 4px;
    fill: #444;
}

.pic-dim {
    fill: #999;
}

.pic-sample {
    font-size: 4px;
    fill: #111;
}

.pic-heading {
    font-size: 5px;
    fill: #5b9bd5;
}

.pic-big {
    font-size: 10px;
}

.pic-style {
    font-size: 8px;
    fill: #2372ba;
}

.pic-ruler {
    font-size: 3px;
}

.pic-status {
    font-size: 4px;
    fill: #fff;
}

.answer {
    position: absolute;
    width: 66px;
    height: 47px;
    padding: 4px 8px;
    border: 1px solid #222;
    background-color: #fff;
    color: #222;
    font: 10px/12px Lato, "Open Sans", sans-serif;
}

.answer-1 { left: 269px; top: 21px; }
.answer-2 { left: 369px; top: 22px; }
.answer-3 { left: 20px; top: 151px; }
.answer-4 { left: 142px; top: 139px; }
.answer-5 { left: 277px; top: 137px; }
.answer-6 { left: 382px; top: 160px; }
.answer-7 { left: 62px; top: 256px; }
.answer-8 { left: 313px; top: 247px; }
.answer-9 { left: 389px; top: 314px; }
.answer-10 { left: 60px; top: 400px; }
.answer-11 { left: 364px; top: 414px; }

.pointers {
    position: absolute;
    left: 0;
    top: 0;
}

.layout-options {
    position: absolute;
    left: 512px;
    top: 74px;
    border: 1px solid #ababab;
    background-color: #fff;
}

.scrollbar {
    display: flex;
    flex-direction: column;
    justify-content: flex-end;
    width: 2px;
    padding-bottom: 9px;
    background-color: #f0f0f0;
}

.scroll-thumb {
    height: 45px;
    background-color: #999;
}

/* Status bar */
.status {
    flex: none;
    display: flex;
    align-items: center;
    gap: 10px;
    height: 13px;
    padding-left: 5px;
    background-color: #333;
    color: #fff;
    font-family: Roboto, "Open Sans", sans-serif;
    overflow: hidden;
}

.status span {
    white-space: nowrap;
}

.view-switch {
    display: flex;
    height: 13px;
    margin-left: auto;
}

.view-switch button {
    width: 22px;
    display: flex;
    align-items: center;
    justify-content: center;
}

.view-switch .view-current {
    background-color: #000;
}

.zoom {
    display: flex;
    align-items: center;
    gap: 2px;
    width: 94px;
    margin-left: -9px;
    flex: none;
}

.zoom-range {
    appearance: none;
    width: 60px;
    height: 9px;
    margin: 0;
    background: linear-gradient(#ccc, #ccc) center / 100% 1px no-repeat;
}

.zoom-range::-webkit-slider-thumb {
    appearance: none;
    width: 3px;
    height: 7px;
    background-color: #fff;
}

.zoom-value {
    margin-left: 2px;
}

/* Windows taskbar */
.taskbar {
    flex: none;
    display: flex;
    height: 23px;
    background-image: linear-gradient(90deg, #20353f, #203343 60%, #1c2846);
    color: #fff;
}

.start {
    width: 28px;
    padding-left: 8px;
}

.search {
    display: flex;
    align-items: center;
    gap: 6px;
    width: 199px;
    margin-right: 1px;
    padding-left: 7px;
    background-color: #f2f2f2;
}

.search input {
    width: 100%;
    border: none;
    padding: 0;
    background: none;
    outline: none;
    font: 8px/12px "Open Sans", "Noto Sans", sans-serif;
}

.search input::placeholder {
    color: #555;
}

.app {
    width: 28px;
    display: flex;
    align-items: center;
    justify-content: center;
}

.app-open {
    box-shadow: inset 0 -1px #76b9ed;
}

.app-current {
    background-color: #4c5f71;
}

.badge-text {
    font-size: 7px;
    fill: #fff;
    text-anchor: middle;
}

.tray {
    display: flex;
    align-items: center;
    gap: 5px;
    margin-left: auto;
    padding-right: 4px;
}

.clock {
    margin: 0 6px 0 1px;
    line-height: 10px;
    text-align: center;
}
```
